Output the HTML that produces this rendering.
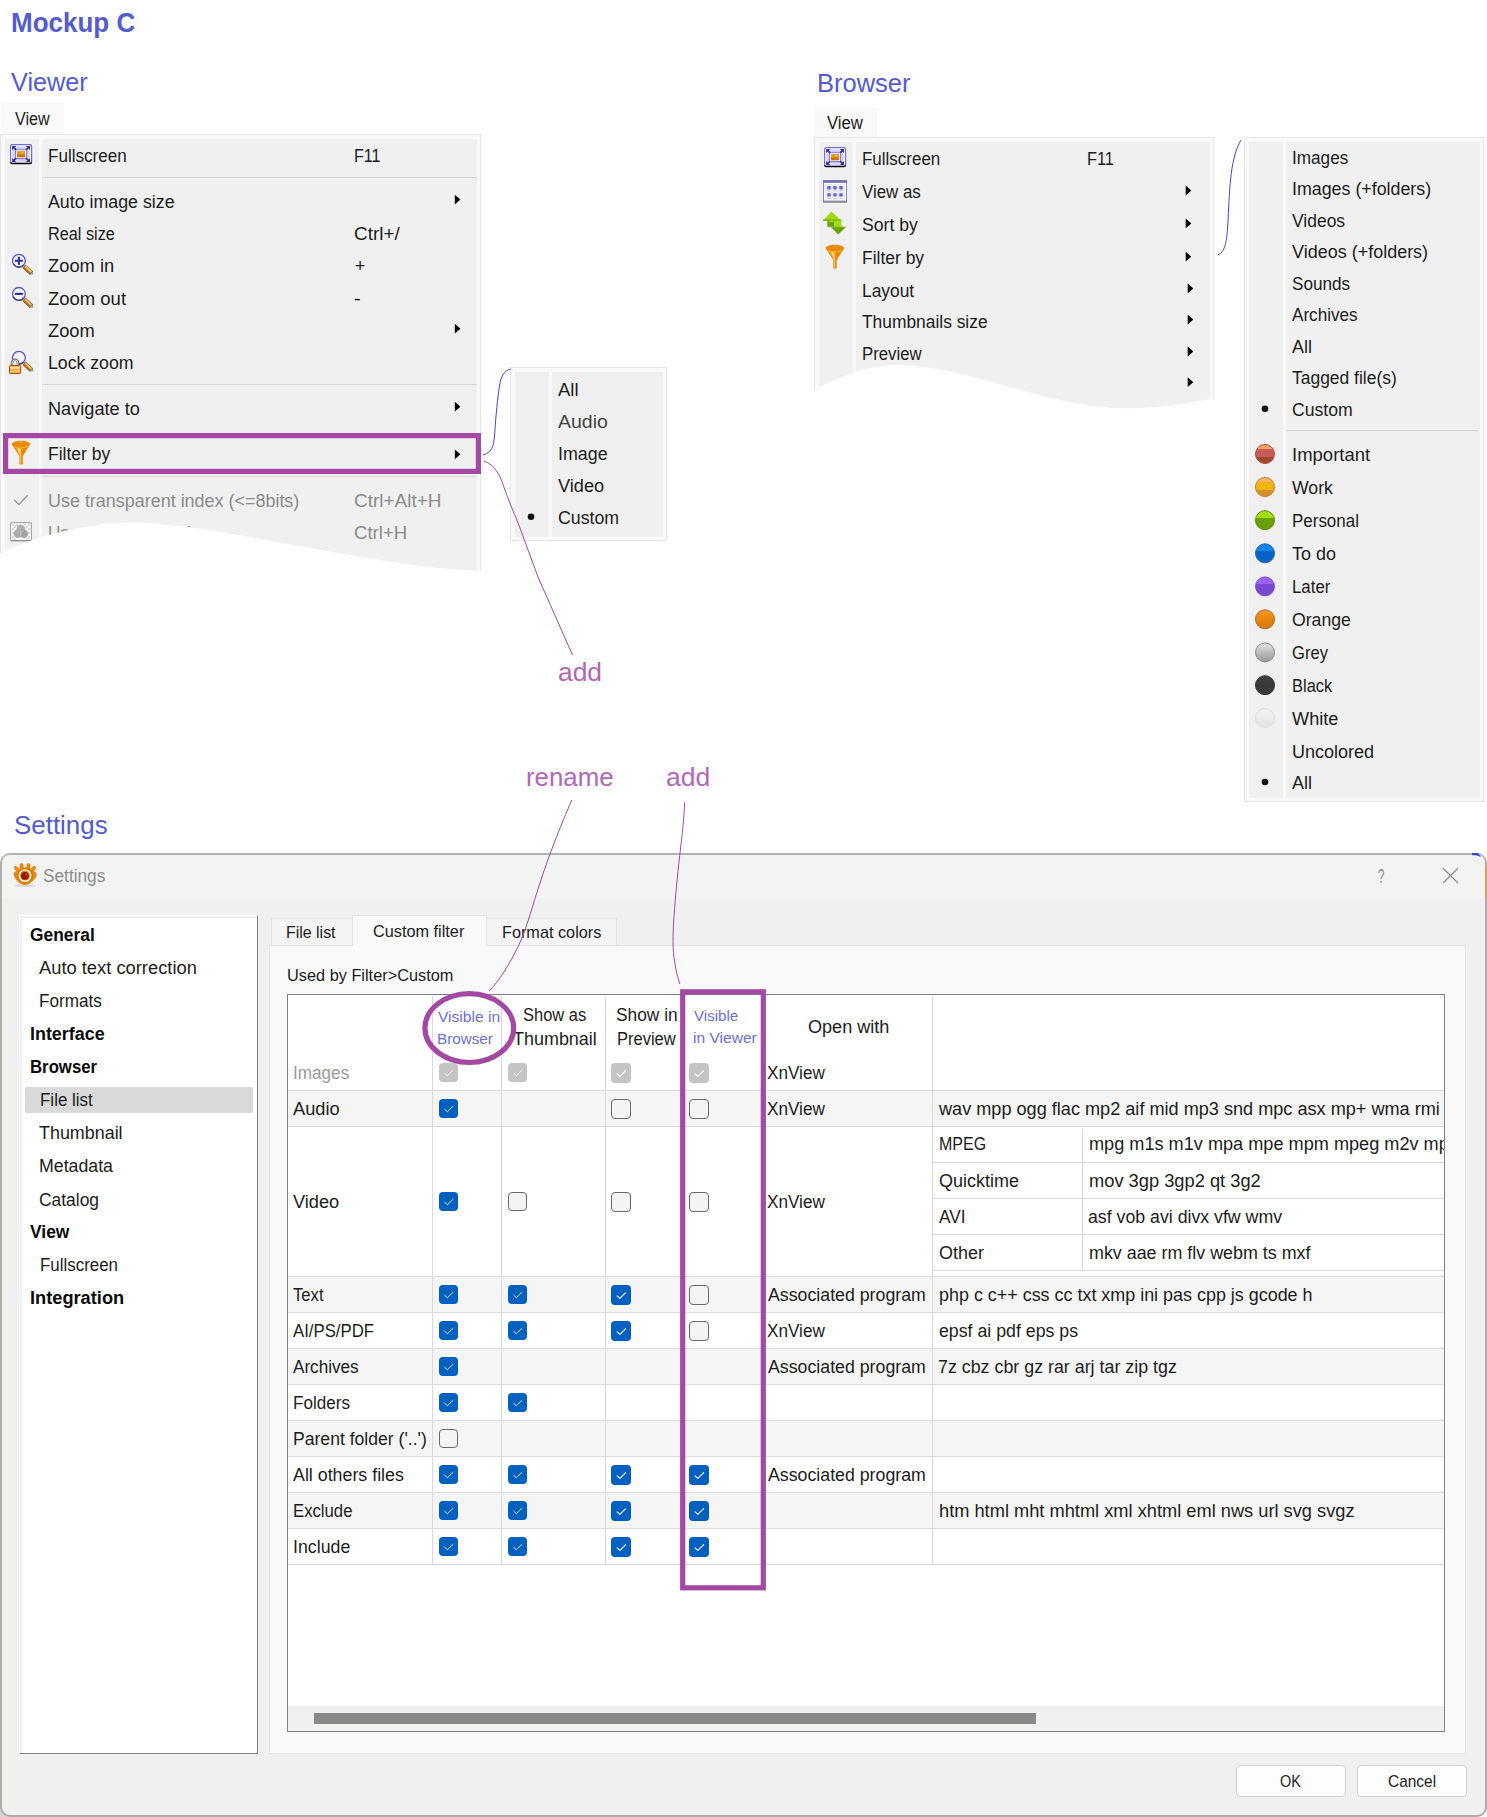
<!DOCTYPE html>
<html lang="en"><head><meta charset="utf-8"><title>Mockup C</title>
<style>
html,body{margin:0;padding:0;background:#fff}
body{width:1487px;height:1817px;position:relative;overflow:hidden;font-family:"Liberation Sans",sans-serif}
.a{position:absolute;box-sizing:border-box}
.t{position:absolute;white-space:nowrap;line-height:1;transform-origin:0 0;display:block}
svg{position:absolute;left:0;top:0;overflow:visible}
.cb{position:absolute;box-sizing:border-box;border-radius:4px}
.cb.on{background:#0060c0}
.cb.dis{background:#c4c4c4}
.cb.off{background:#f4f4f4;border:1px solid #6a6a6a}
</style></head><body>

<span class="t" style="left:10.96px;top:10.15px;font-size:27px;color:#535bce;transform:scaleX(0.9624);font-weight:bold;">Mockup C</span>
<span class="t" style="left:11.09px;top:69.15px;font-size:26.5px;color:#535bce;transform:scaleX(0.9529);">Viewer</span>
<span class="t" style="left:817.31px;top:70.15px;font-size:26.5px;color:#535bce;transform:scaleX(0.9622);">Browser</span>
<span class="t" style="left:13.72px;top:813.15px;font-size:25.5px;color:#535bce;transform:scaleX(1.0160);">Settings</span>
<div class="a" style="left:1px;top:103px;width:63px;height:31px;background:#f9f9f9;"></div>
<span class="t" style="left:14.73px;top:111.15px;font-size:17.5px;color:#1c1c1c;transform:scaleX(0.9207);">View</span>
<div class="a" style="left:0px;top:134px;width:481px;height:466px;background:#f9f9f9;border:1px solid #e5e5e5;"></div>
<div class="a" style="left:5px;top:139px;width:34px;height:457px;background:#f0f0f0;"></div>
<div class="a" style="left:42px;top:139px;width:435px;height:457px;background:#f0f0f0;"></div>
<div class="a" style="left:42px;top:177px;width:435px;height:1px;background:#d6d6d6;"></div>
<div class="a" style="left:42px;top:384px;width:435px;height:1px;background:#d6d6d6;"></div>
<div class="a" style="left:42px;top:475.5px;width:435px;height:1px;background:#d6d6d6;"></div>
<span class="t" style="left:48.20px;top:148.15px;font-size:17.5px;color:#1c1c1c;transform:scaleX(0.9763);">Fullscreen</span>
<span class="t" style="left:48.17px;top:194.15px;font-size:17.5px;color:#1c1c1c;transform:scaleX(1.0162);">Auto image size</span>
<span class="t" style="left:48.27px;top:226.15px;font-size:17.5px;color:#1c1c1c;transform:scaleX(0.9289);">Real size</span>
<span class="t" style="left:48.02px;top:258.15px;font-size:17.5px;color:#1c1c1c;transform:scaleX(1.0468);">Zoom in</span>
<span class="t" style="left:48.01px;top:291.15px;font-size:17.5px;color:#1c1c1c;transform:scaleX(1.0555);">Zoom out</span>
<span class="t" style="left:48.02px;top:323.15px;font-size:17.5px;color:#1c1c1c;transform:scaleX(1.0459);">Zoom</span>
<span class="t" style="left:48.15px;top:355.15px;font-size:17.5px;color:#1c1c1c;transform:scaleX(1.0094);">Lock zoom</span>
<span class="t" style="left:48.11px;top:401.15px;font-size:17.5px;color:#1c1c1c;transform:scaleX(1.0376);">Navigate to</span>
<span class="t" style="left:48.16px;top:446.15px;font-size:17.5px;color:#1c1c1c;transform:scaleX(1.0006);">Filter by</span>
<span class="t" style="left:48.22px;top:493.15px;font-size:17.5px;color:#8b8b8b;transform:scaleX(1.0252);">Use transparent index (&lt;=8bits)</span>
<span class="t" style="left:48.27px;top:525.15px;font-size:17.5px;color:#8b8b8b;transform:scaleX(0.9849);">Use alpha channel</span>
<span class="t" style="left:354.38px;top:148.15px;font-size:17.5px;color:#1c1c1c;transform:scaleX(0.9185);">F11</span>
<span class="t" style="left:354.04px;top:226.15px;font-size:17.5px;color:#1c1c1c;transform:scaleX(1.0795);">Ctrl+/</span>
<span class="t" style="left:354.55px;top:258.15px;font-size:17.5px;color:#1c1c1c;transform:scaleX(0.9997);">+</span>
<span class="t" style="left:353.91px;top:291.15px;font-size:17.5px;color:#1c1c1c;transform:scaleX(1.1469);">-</span>
<span class="t" style="left:354.04px;top:493.15px;font-size:17.5px;color:#8b8b8b;transform:scaleX(1.0842);">Ctrl+Alt+H</span>
<span class="t" style="left:354.06px;top:525.15px;font-size:17.5px;color:#8b8b8b;transform:scaleX(1.0616);">Ctrl+H</span>
<div class="a" style="left:510px;top:367px;width:157px;height:174px;background:#f9f9f9;border:1px solid #e5e5e5;"></div>
<div class="a" style="left:515px;top:372px;width:34px;height:165px;background:#f0f0f0;"></div>
<div class="a" style="left:552px;top:372px;width:111px;height:165px;background:#f0f0f0;"></div>
<span class="t" style="left:557.96px;top:382.15px;font-size:17.5px;color:#1c1c1c;transform:scaleX(1.0579);">All</span>
<span class="t" style="left:557.96px;top:414.15px;font-size:17.5px;color:#444;transform:scaleX(1.1139);">Audio</span>
<span class="t" style="left:557.75px;top:446.15px;font-size:17.5px;color:#1c1c1c;transform:scaleX(1.0206);">Image</span>
<span class="t" style="left:557.92px;top:478.15px;font-size:17.5px;color:#1c1c1c;transform:scaleX(1.0383);">Video</span>
<span class="t" style="left:557.80px;top:510.15px;font-size:17.5px;color:#1c1c1c;transform:scaleX(1.0129);">Custom</span>
<div class="a" style="left:814px;top:107.5px;width:63px;height:29.5px;background:#f9f9f9;"></div>
<span class="t" style="left:827.43px;top:115.15px;font-size:17.5px;color:#1c1c1c;transform:scaleX(0.9553);">View</span>
<div class="a" style="left:814px;top:137px;width:400px;height:303px;background:#f9f9f9;border:1px solid #e5e5e5;"></div>
<div class="a" style="left:819px;top:142px;width:34px;height:294px;background:#f0f0f0;"></div>
<div class="a" style="left:856px;top:142px;width:354px;height:294px;background:#f0f0f0;"></div>
<span class="t" style="left:862.41px;top:151.15px;font-size:17.5px;color:#1c1c1c;transform:scaleX(0.9699);">Fullscreen</span>
<span class="t" style="left:862.33px;top:184.15px;font-size:17.5px;color:#1c1c1c;transform:scaleX(0.9627);">View as</span>
<span class="t" style="left:862.20px;top:217.15px;font-size:17.5px;color:#1c1c1c;transform:scaleX(1.0071);">Sort by</span>
<span class="t" style="left:862.37px;top:250.15px;font-size:17.5px;color:#1c1c1c;transform:scaleX(0.9973);">Filter by</span>
<span class="t" style="left:862.38px;top:283.15px;font-size:17.5px;color:#1c1c1c;transform:scaleX(0.9926);">Layout</span>
<span class="t" style="left:862.21px;top:314.15px;font-size:17.5px;color:#1c1c1c;transform:scaleX(0.9931);">Thumbnails size</span>
<span class="t" style="left:862.42px;top:346.15px;font-size:17.5px;color:#1c1c1c;transform:scaleX(0.9581);">Preview</span>
<span class="t" style="left:1087.26px;top:151.15px;font-size:17.5px;color:#1c1c1c;transform:scaleX(0.9335);">F11</span>
<div class="a" style="left:1244px;top:136.5px;width:240px;height:665.0px;background:#f9f9f9;border:1px solid #e5e5e5;"></div>
<div class="a" style="left:1249px;top:141.5px;width:34px;height:656.0px;background:#f0f0f0;"></div>
<div class="a" style="left:1286px;top:141.5px;width:194px;height:656.0px;background:#f0f0f0;"></div>
<div class="a" style="left:1286px;top:429.5px;width:192px;height:1px;background:#d6d6d6;"></div>
<span class="t" style="left:1292.02px;top:150.15px;font-size:17.5px;color:#1c1c1c;transform:scaleX(0.9811);">Images</span>
<span class="t" style="left:1291.96px;top:181.15px;font-size:17.5px;color:#1c1c1c;transform:scaleX(1.0183);">Images (+folders)</span>
<span class="t" style="left:1292.12px;top:213.15px;font-size:17.5px;color:#1c1c1c;transform:scaleX(0.9984);">Videos</span>
<span class="t" style="left:1292.12px;top:244.15px;font-size:17.5px;color:#1c1c1c;transform:scaleX(1.0275);">Videos (+folders)</span>
<span class="t" style="left:1292.02px;top:276.15px;font-size:17.5px;color:#1c1c1c;transform:scaleX(0.9806);">Sounds</span>
<span class="t" style="left:1292.17px;top:307.15px;font-size:17.5px;color:#1c1c1c;transform:scaleX(0.9784);">Archives</span>
<span class="t" style="left:1292.16px;top:339.15px;font-size:17.5px;color:#1c1c1c;transform:scaleX(1.0250);">All</span>
<span class="t" style="left:1292.01px;top:370.15px;font-size:17.5px;color:#1c1c1c;transform:scaleX(0.9974);">Tagged file(s)</span>
<span class="t" style="left:1292.00px;top:402.15px;font-size:17.5px;color:#1c1c1c;transform:scaleX(1.0077);">Custom</span>
<span class="t" style="left:1291.89px;top:447.15px;font-size:17.5px;color:#1c1c1c;transform:scaleX(1.0571);">Important</span>
<span class="t" style="left:1292.12px;top:480.15px;font-size:17.5px;color:#1c1c1c;transform:scaleX(1.0084);">Work</span>
<span class="t" style="left:1292.21px;top:513.15px;font-size:17.5px;color:#1c1c1c;transform:scaleX(0.9690);">Personal</span>
<span class="t" style="left:1292.00px;top:546.15px;font-size:17.5px;color:#1c1c1c;transform:scaleX(1.0268);">To do</span>
<span class="t" style="left:1292.22px;top:579.15px;font-size:17.5px;color:#1c1c1c;transform:scaleX(0.9617);">Later</span>
<span class="t" style="left:1292.06px;top:612.15px;font-size:17.5px;color:#1c1c1c;transform:scaleX(1.0077);">Orange</span>
<span class="t" style="left:1292.07px;top:645.15px;font-size:17.5px;color:#1c1c1c;transform:scaleX(0.9484);">Grey</span>
<span class="t" style="left:1292.25px;top:678.15px;font-size:17.5px;color:#1c1c1c;transform:scaleX(0.9400);">Black</span>
<span class="t" style="left:1292.12px;top:711.15px;font-size:17.5px;color:#1c1c1c;transform:scaleX(1.0370);">White</span>
<span class="t" style="left:1292.21px;top:744.15px;font-size:17.5px;color:#1c1c1c;transform:scaleX(1.0286);">Uncolored</span>
<span class="t" style="left:1292.16px;top:775.15px;font-size:17.5px;color:#1c1c1c;transform:scaleX(1.0250);">All</span>
<div class="a" style="left:0px;top:1805px;width:12px;height:12px;background:#d6d6d6;"></div>
<div class="a" style="left:0;top:853px;width:1487px;height:964px;background:#f0f0f0;border:2px solid #adada9;border-top-color:#b2b2b2;border-radius:10px;overflow:hidden"><div class="a" style="left:0;top:0;width:1487px;height:43px;background:#f2f4f3"></div></div>
<div class="a" style="left:1485px;top:865px;width:2px;height:34px;background:#c9a468;"></div>
<span class="t" style="left:43.02px;top:868.15px;font-size:17.5px;color:#8c8c8c;transform:scaleX(0.9854);">Settings</span>
<span class="t" style="left:1377.64px;top:865.15px;font-size:21px;color:#8c8c8c;transform:scaleX(0.5379);">?</span>
<div class="a" style="left:19px;top:915px;width:239px;height:839px;background:#f0f0f0;border-left:1px solid #fff;border-top:1px solid #fff;border-right:1px solid #7d8089;border-bottom:1px solid #7d8089;"></div>
<div class="a" style="left:22px;top:918px;width:235px;height:835px;background:#fff;"></div>
<div class="a" style="left:25px;top:1086.5px;width:228px;height:26px;background:#d9d9d9;border-radius:2px;"></div>
<span class="t" style="left:29.69px;top:927.15px;font-size:17.5px;color:#0a0a0a;transform:scaleX(0.9934);font-weight:bold;">General</span>
<span class="t" style="left:39.46px;top:960.15px;font-size:17.5px;color:#1c1c1c;transform:scaleX(1.0468);">Auto text correction</span>
<span class="t" style="left:39.49px;top:993.15px;font-size:17.5px;color:#1c1c1c;transform:scaleX(0.9790);">Formats</span>
<span class="t" style="left:29.90px;top:1026.15px;font-size:17.5px;color:#0a0a0a;transform:scaleX(1.0228);font-weight:bold;">Interface</span>
<span class="t" style="left:29.98px;top:1059.15px;font-size:17.5px;color:#0a0a0a;transform:scaleX(0.9579);font-weight:bold;">Browser</span>
<span class="t" style="left:39.51px;top:1092.15px;font-size:17.5px;color:#1c1c1c;transform:scaleX(0.9700);">File list</span>
<span class="t" style="left:39.30px;top:1125.15px;font-size:17.5px;color:#1c1c1c;transform:scaleX(1.0232);">Thumbnail</span>
<span class="t" style="left:39.44px;top:1158.15px;font-size:17.5px;color:#1c1c1c;transform:scaleX(1.0136);">Metadata</span>
<span class="t" style="left:39.32px;top:1192.15px;font-size:17.5px;color:#1c1c1c;transform:scaleX(0.9948);">Catalog</span>
<span class="t" style="left:29.58px;top:1224.15px;font-size:17.5px;color:#0a0a0a;transform:scaleX(0.9955);font-weight:bold;">View</span>
<span class="t" style="left:39.51px;top:1257.15px;font-size:17.5px;color:#1c1c1c;transform:scaleX(0.9661);">Fullscreen</span>
<span class="t" style="left:29.88px;top:1290.15px;font-size:17.5px;color:#0a0a0a;transform:scaleX(1.0413);font-weight:bold;">Integration</span>
<div class="a" style="left:271px;top:918px;width:82px;height:28px;background:#f3f4f3;border:1px solid #e4e4e4;"></div>
<div class="a" style="left:486px;top:918px;width:131px;height:28px;background:#f3f4f3;border:1px solid #e4e4e4;"></div>
<div class="a" style="left:268.5px;top:945px;width:1197.5px;height:808.5px;background:#f9f9f9;border:1px solid #e4e4e4;"></div>
<div class="a" style="left:352px;top:915px;width:134.5px;height:31px;background:#f9f9f9;border:1px solid #e4e4e4;border-bottom:none;"></div>
<span class="t" style="left:286.29px;top:924.15px;font-size:17px;color:#1c1c1c;transform:scaleX(0.9363);">File list</span>
<span class="t" style="left:373.17px;top:923.15px;font-size:17px;color:#1c1c1c;transform:scaleX(0.9569);">Custom filter</span>
<span class="t" style="left:502.27px;top:924.15px;font-size:17px;color:#1c1c1c;transform:scaleX(0.9558);">Format colors</span>
<span class="t" style="left:287.34px;top:967.15px;font-size:17px;color:#1c1c1c;transform:scaleX(0.9600);">Used by Filter&gt;Custom</span>
<div class="a" style="left:287px;top:994px;width:1158px;height:738px;background:#fff;border:1px solid #7d8089;"></div>
<div class="a" style="left:288px;top:1090px;width:1155.5px;height:36px;background:#f5f5f5;"></div>
<div class="a" style="left:288px;top:1276.5px;width:1155.5px;height:36.0px;background:#f5f5f5;"></div>
<div class="a" style="left:288px;top:1348.5px;width:1155.5px;height:36.0px;background:#f5f5f5;"></div>
<div class="a" style="left:288px;top:1420.5px;width:1155.5px;height:36.0px;background:#f5f5f5;"></div>
<div class="a" style="left:288px;top:1492.5px;width:1155.5px;height:36.0px;background:#f5f5f5;"></div>
<div class="a" style="left:288px;top:1089.5px;width:1155.5px;height:1px;background:#d9d9d9;"></div>
<div class="a" style="left:288px;top:1125.5px;width:1155.5px;height:1px;background:#d9d9d9;"></div>
<div class="a" style="left:288px;top:1276.0px;width:1155.5px;height:1px;background:#d9d9d9;"></div>
<div class="a" style="left:288px;top:1312.0px;width:1155.5px;height:1px;background:#d9d9d9;"></div>
<div class="a" style="left:288px;top:1348.0px;width:1155.5px;height:1px;background:#d9d9d9;"></div>
<div class="a" style="left:288px;top:1384.0px;width:1155.5px;height:1px;background:#d9d9d9;"></div>
<div class="a" style="left:288px;top:1420.0px;width:1155.5px;height:1px;background:#d9d9d9;"></div>
<div class="a" style="left:288px;top:1456.0px;width:1155.5px;height:1px;background:#d9d9d9;"></div>
<div class="a" style="left:288px;top:1492.0px;width:1155.5px;height:1px;background:#d9d9d9;"></div>
<div class="a" style="left:288px;top:1528.0px;width:1155.5px;height:1px;background:#d9d9d9;"></div>
<div class="a" style="left:288px;top:1564.0px;width:1155.5px;height:1px;background:#d9d9d9;"></div>
<div class="a" style="left:432.0px;top:996px;width:1px;height:568.5px;background:#d9d9d9;"></div>
<div class="a" style="left:501.0px;top:996px;width:1px;height:568.5px;background:#d9d9d9;"></div>
<div class="a" style="left:605.0px;top:996px;width:1px;height:568.5px;background:#d9d9d9;"></div>
<div class="a" style="left:932.0px;top:996px;width:1px;height:568.5px;background:#d9d9d9;"></div>
<div class="a" style="left:933px;top:1161.5px;width:510.5px;height:1px;background:#d9d9d9;"></div>
<div class="a" style="left:933px;top:1197.8px;width:510.5px;height:1px;background:#d9d9d9;"></div>
<div class="a" style="left:933px;top:1233.8px;width:510.5px;height:1px;background:#d9d9d9;"></div>
<div class="a" style="left:933px;top:1269.7px;width:510.5px;height:1px;background:#d9d9d9;"></div>
<div class="a" style="left:1082.2px;top:1129px;width:1px;height:141px;background:#d9d9d9;"></div>
<div class="a" style="left:288px;top:1706px;width:1156px;height:24.5px;background:#f0f0f0;"></div>
<div class="a" style="left:314px;top:1713px;width:722px;height:11px;background:#898987;"></div>
<span class="t" style="left:438.33px;top:1009.15px;font-size:15px;color:#6a70d6;transform:scaleX(1.0389);">Visible in</span>
<span class="t" style="left:437.15px;top:1031.15px;font-size:15px;color:#6a70d6;transform:scaleX(1.0162);">Browser</span>
<span class="t" style="left:523.25px;top:1007.15px;font-size:17.5px;color:#1c1c1c;transform:scaleX(0.9407);">Show as</span>
<span class="t" style="left:512.70px;top:1031.15px;font-size:17.5px;color:#1c1c1c;transform:scaleX(1.0257);">Thumbnail</span>
<span class="t" style="left:615.51px;top:1007.15px;font-size:17.5px;color:#1c1c1c;transform:scaleX(0.9896);">Show in</span>
<span class="t" style="left:616.65px;top:1031.15px;font-size:17.5px;color:#1c1c1c;transform:scaleX(0.9433);">Preview</span>
<span class="t" style="left:693.53px;top:1008.15px;font-size:15px;color:#6a70d6;transform:scaleX(1.0073);">Visible</span>
<span class="t" style="left:692.56px;top:1030.15px;font-size:15px;color:#6a70d6;transform:scaleX(1.0388);">in Viewer</span>
<span class="t" style="left:808.14px;top:1019.15px;font-size:17.5px;color:#1c1c1c;transform:scaleX(1.0322);">Open with</span>
<span class="t" style="left:293.02px;top:1065.15px;font-size:17.5px;color:#9a9a9a;transform:scaleX(0.9793);">Images</span>
<span class="t" style="left:293.16px;top:1101.15px;font-size:17.5px;color:#1c1c1c;transform:scaleX(1.0434);">Audio</span>
<span class="t" style="left:293.12px;top:1194.15px;font-size:17.5px;color:#1c1c1c;transform:scaleX(1.0406);">Video</span>
<span class="t" style="left:293.03px;top:1287.15px;font-size:17.5px;color:#1c1c1c;transform:scaleX(0.9502);">Text</span>
<span class="t" style="left:293.17px;top:1323.15px;font-size:17.5px;color:#1c1c1c;transform:scaleX(0.9575);">AI/PS/PDF</span>
<span class="t" style="left:293.17px;top:1359.15px;font-size:17.5px;color:#1c1c1c;transform:scaleX(0.9784);">Archives</span>
<span class="t" style="left:293.20px;top:1395.15px;font-size:17.5px;color:#1c1c1c;transform:scaleX(0.9754);">Folders</span>
<span class="t" style="left:293.16px;top:1431.15px;font-size:17.5px;color:#1c1c1c;transform:scaleX(1.0046);">Parent folder (&#x27;..&#x27;)</span>
<span class="t" style="left:293.17px;top:1467.15px;font-size:17.5px;color:#1c1c1c;transform:scaleX(1.0179);">All others files</span>
<span class="t" style="left:293.23px;top:1503.15px;font-size:17.5px;color:#1c1c1c;transform:scaleX(0.9543);">Exclude</span>
<span class="t" style="left:292.96px;top:1539.15px;font-size:17.5px;color:#1c1c1c;transform:scaleX(1.0160);">Include</span>
<span class="t" style="left:767.31px;top:1065.15px;font-size:17.5px;color:#1c1c1c;transform:scaleX(0.9801);">XnView</span>
<span class="t" style="left:767.31px;top:1101.15px;font-size:17.5px;color:#1c1c1c;transform:scaleX(0.9801);">XnView</span>
<span class="t" style="left:938.73px;top:1101.15px;font-size:17.5px;color:#1c1c1c;transform:scaleX(1.0352);">wav mpp ogg flac mp2 aif mid mp3 snd mpc asx mp+ wma rmi</span>
<span class="t" style="left:767.31px;top:1194.15px;font-size:17.5px;color:#1c1c1c;transform:scaleX(0.9801);">XnView</span>
<span class="t" style="left:767.67px;top:1287.15px;font-size:17.5px;color:#1c1c1c;transform:scaleX(1.0140);">Associated program</span>
<span class="t" style="left:938.74px;top:1287.15px;font-size:17.5px;color:#1c1c1c;transform:scaleX(1.0240);">php c c++ css cc txt xmp ini pas cpp js gcode h</span>
<span class="t" style="left:767.31px;top:1323.15px;font-size:17.5px;color:#1c1c1c;transform:scaleX(0.9801);">XnView</span>
<span class="t" style="left:938.55px;top:1323.15px;font-size:17.5px;color:#1c1c1c;transform:scaleX(1.0140);">epsf ai pdf eps ps</span>
<span class="t" style="left:767.67px;top:1359.15px;font-size:17.5px;color:#1c1c1c;transform:scaleX(1.0140);">Associated program</span>
<span class="t" style="left:938.49px;top:1359.15px;font-size:17.5px;color:#1c1c1c;transform:scaleX(1.0189);">7z cbz cbr gz rar arj tar zip tgz</span>
<span class="t" style="left:767.67px;top:1467.15px;font-size:17.5px;color:#1c1c1c;transform:scaleX(1.0140);">Associated program</span>
<span class="t" style="left:938.64px;top:1503.15px;font-size:17.5px;color:#1c1c1c;transform:scaleX(1.0424);">htm html mht mhtml xml xhtml eml nws url svg svgz</span>
<span class="t" style="left:938.79px;top:1136.15px;font-size:17.5px;color:#1c1c1c;transform:scaleX(0.9141);">MPEG</span>
<span class="t" style="left:938.55px;top:1173.15px;font-size:17.5px;color:#1c1c1c;transform:scaleX(1.0277);">Quicktime</span>
<span class="t" style="left:938.67px;top:1209.15px;font-size:17.5px;color:#1c1c1c;transform:scaleX(0.9858);">AVI</span>
<span class="t" style="left:938.55px;top:1245.15px;font-size:17.5px;color:#1c1c1c;transform:scaleX(1.0247);">Other</span>
<div class="a" style="left:1083px;top:1128px;width:360.5px;height:36px;overflow:hidden">
<span class="t" style="left:5.60px;top:8.15px;font-size:17.5px;color:#1c1c1c;transform:scaleX(1.0363);">mpg m1s m1v mpa mpe mpm mpeg m2v mpv</span>
</div>
<span class="t" style="left:1088.59px;top:1173.15px;font-size:17.5px;color:#1c1c1c;transform:scaleX(1.0444);">mov 3gp 3gp2 qt 3g2</span>
<span class="t" style="left:1088.45px;top:1209.15px;font-size:17.5px;color:#1c1c1c;transform:scaleX(1.0127);">asf vob avi divx vfw wmv</span>
<span class="t" style="left:1088.61px;top:1245.15px;font-size:17.5px;color:#1c1c1c;transform:scaleX(1.0213);">mkv aae rm flv webm ts mxf</span>
<div class="cb dis" style="left:439px;top:1063.0px;width:19px;height:19px"><svg width="19" height="19" viewBox="0 0 19 19"><path d="M5.8 10.3 L8.4 12.7 L13.9 7.3" fill="none" stroke="#fff" stroke-width="0.85" stroke-linecap="round" stroke-linejoin="round"/></svg></div>
<div class="cb dis" style="left:508px;top:1063.0px;width:19px;height:19px"><svg width="19" height="19" viewBox="0 0 19 19"><path d="M5.8 10.3 L8.4 12.7 L13.9 7.3" fill="none" stroke="#fff" stroke-width="0.85" stroke-linecap="round" stroke-linejoin="round"/></svg></div>
<div class="cb dis" style="left:611px;top:1063.0px;width:20px;height:20px"><svg width="20" height="20" viewBox="0 0 19 19"><path d="M5.8 10.3 L8.4 12.7 L13.9 7.3" fill="none" stroke="#fff" stroke-width="1.05" stroke-linecap="round" stroke-linejoin="round"/></svg></div>
<div class="cb dis" style="left:689px;top:1063.0px;width:20px;height:20px"><svg width="20" height="20" viewBox="0 0 19 19"><path d="M5.8 10.3 L8.4 12.7 L13.9 7.3" fill="none" stroke="#fff" stroke-width="1.05" stroke-linecap="round" stroke-linejoin="round"/></svg></div>
<div class="cb on" style="left:439px;top:1099.0px;width:19px;height:19px"><svg width="19" height="19" viewBox="0 0 19 19"><path d="M5.8 10.3 L8.4 12.7 L13.9 7.3" fill="none" stroke="#fff" stroke-width="0.85" stroke-linecap="round" stroke-linejoin="round"/></svg></div>
<div class="cb off" style="left:611px;top:1099.0px;width:20px;height:20px"></div>
<div class="cb off" style="left:689px;top:1099.0px;width:20px;height:20px"></div>
<div class="cb on" style="left:439px;top:1192.0px;width:19px;height:19px"><svg width="19" height="19" viewBox="0 0 19 19"><path d="M5.8 10.3 L8.4 12.7 L13.9 7.3" fill="none" stroke="#fff" stroke-width="0.85" stroke-linecap="round" stroke-linejoin="round"/></svg></div>
<div class="cb off" style="left:508px;top:1192.0px;width:19px;height:19px"></div>
<div class="cb off" style="left:611px;top:1192.0px;width:20px;height:20px"></div>
<div class="cb off" style="left:689px;top:1192.0px;width:20px;height:20px"></div>
<div class="cb on" style="left:439px;top:1285.0px;width:19px;height:19px"><svg width="19" height="19" viewBox="0 0 19 19"><path d="M5.8 10.3 L8.4 12.7 L13.9 7.3" fill="none" stroke="#fff" stroke-width="0.85" stroke-linecap="round" stroke-linejoin="round"/></svg></div>
<div class="cb on" style="left:508px;top:1285.0px;width:19px;height:19px"><svg width="19" height="19" viewBox="0 0 19 19"><path d="M5.8 10.3 L8.4 12.7 L13.9 7.3" fill="none" stroke="#fff" stroke-width="0.85" stroke-linecap="round" stroke-linejoin="round"/></svg></div>
<div class="cb on" style="left:611px;top:1285.0px;width:20px;height:20px"><svg width="20" height="20" viewBox="0 0 19 19"><path d="M5.8 10.3 L8.4 12.7 L13.9 7.3" fill="none" stroke="#fff" stroke-width="1.05" stroke-linecap="round" stroke-linejoin="round"/></svg></div>
<div class="cb off" style="left:689px;top:1285.0px;width:20px;height:20px"></div>
<div class="cb on" style="left:439px;top:1321.0px;width:19px;height:19px"><svg width="19" height="19" viewBox="0 0 19 19"><path d="M5.8 10.3 L8.4 12.7 L13.9 7.3" fill="none" stroke="#fff" stroke-width="0.85" stroke-linecap="round" stroke-linejoin="round"/></svg></div>
<div class="cb on" style="left:508px;top:1321.0px;width:19px;height:19px"><svg width="19" height="19" viewBox="0 0 19 19"><path d="M5.8 10.3 L8.4 12.7 L13.9 7.3" fill="none" stroke="#fff" stroke-width="0.85" stroke-linecap="round" stroke-linejoin="round"/></svg></div>
<div class="cb on" style="left:611px;top:1321.0px;width:20px;height:20px"><svg width="20" height="20" viewBox="0 0 19 19"><path d="M5.8 10.3 L8.4 12.7 L13.9 7.3" fill="none" stroke="#fff" stroke-width="1.05" stroke-linecap="round" stroke-linejoin="round"/></svg></div>
<div class="cb off" style="left:689px;top:1321.0px;width:20px;height:20px"></div>
<div class="cb on" style="left:439px;top:1357.0px;width:19px;height:19px"><svg width="19" height="19" viewBox="0 0 19 19"><path d="M5.8 10.3 L8.4 12.7 L13.9 7.3" fill="none" stroke="#fff" stroke-width="0.85" stroke-linecap="round" stroke-linejoin="round"/></svg></div>
<div class="cb on" style="left:439px;top:1393.0px;width:19px;height:19px"><svg width="19" height="19" viewBox="0 0 19 19"><path d="M5.8 10.3 L8.4 12.7 L13.9 7.3" fill="none" stroke="#fff" stroke-width="0.85" stroke-linecap="round" stroke-linejoin="round"/></svg></div>
<div class="cb on" style="left:508px;top:1393.0px;width:19px;height:19px"><svg width="19" height="19" viewBox="0 0 19 19"><path d="M5.8 10.3 L8.4 12.7 L13.9 7.3" fill="none" stroke="#fff" stroke-width="0.85" stroke-linecap="round" stroke-linejoin="round"/></svg></div>
<div class="cb off" style="left:439px;top:1429.0px;width:19px;height:19px"></div>
<div class="cb on" style="left:439px;top:1465.0px;width:19px;height:19px"><svg width="19" height="19" viewBox="0 0 19 19"><path d="M5.8 10.3 L8.4 12.7 L13.9 7.3" fill="none" stroke="#fff" stroke-width="0.85" stroke-linecap="round" stroke-linejoin="round"/></svg></div>
<div class="cb on" style="left:508px;top:1465.0px;width:19px;height:19px"><svg width="19" height="19" viewBox="0 0 19 19"><path d="M5.8 10.3 L8.4 12.7 L13.9 7.3" fill="none" stroke="#fff" stroke-width="0.85" stroke-linecap="round" stroke-linejoin="round"/></svg></div>
<div class="cb on" style="left:611px;top:1465.0px;width:20px;height:20px"><svg width="20" height="20" viewBox="0 0 19 19"><path d="M5.8 10.3 L8.4 12.7 L13.9 7.3" fill="none" stroke="#fff" stroke-width="1.05" stroke-linecap="round" stroke-linejoin="round"/></svg></div>
<div class="cb on" style="left:689px;top:1465.0px;width:20px;height:20px"><svg width="20" height="20" viewBox="0 0 19 19"><path d="M5.8 10.3 L8.4 12.7 L13.9 7.3" fill="none" stroke="#fff" stroke-width="1.05" stroke-linecap="round" stroke-linejoin="round"/></svg></div>
<div class="cb on" style="left:439px;top:1501.0px;width:19px;height:19px"><svg width="19" height="19" viewBox="0 0 19 19"><path d="M5.8 10.3 L8.4 12.7 L13.9 7.3" fill="none" stroke="#fff" stroke-width="0.85" stroke-linecap="round" stroke-linejoin="round"/></svg></div>
<div class="cb on" style="left:508px;top:1501.0px;width:19px;height:19px"><svg width="19" height="19" viewBox="0 0 19 19"><path d="M5.8 10.3 L8.4 12.7 L13.9 7.3" fill="none" stroke="#fff" stroke-width="0.85" stroke-linecap="round" stroke-linejoin="round"/></svg></div>
<div class="cb on" style="left:611px;top:1501.0px;width:20px;height:20px"><svg width="20" height="20" viewBox="0 0 19 19"><path d="M5.8 10.3 L8.4 12.7 L13.9 7.3" fill="none" stroke="#fff" stroke-width="1.05" stroke-linecap="round" stroke-linejoin="round"/></svg></div>
<div class="cb on" style="left:689px;top:1501.0px;width:20px;height:20px"><svg width="20" height="20" viewBox="0 0 19 19"><path d="M5.8 10.3 L8.4 12.7 L13.9 7.3" fill="none" stroke="#fff" stroke-width="1.05" stroke-linecap="round" stroke-linejoin="round"/></svg></div>
<div class="cb on" style="left:439px;top:1537.0px;width:19px;height:19px"><svg width="19" height="19" viewBox="0 0 19 19"><path d="M5.8 10.3 L8.4 12.7 L13.9 7.3" fill="none" stroke="#fff" stroke-width="0.85" stroke-linecap="round" stroke-linejoin="round"/></svg></div>
<div class="cb on" style="left:508px;top:1537.0px;width:19px;height:19px"><svg width="19" height="19" viewBox="0 0 19 19"><path d="M5.8 10.3 L8.4 12.7 L13.9 7.3" fill="none" stroke="#fff" stroke-width="0.85" stroke-linecap="round" stroke-linejoin="round"/></svg></div>
<div class="cb on" style="left:611px;top:1537.0px;width:20px;height:20px"><svg width="20" height="20" viewBox="0 0 19 19"><path d="M5.8 10.3 L8.4 12.7 L13.9 7.3" fill="none" stroke="#fff" stroke-width="1.05" stroke-linecap="round" stroke-linejoin="round"/></svg></div>
<div class="cb on" style="left:689px;top:1537.0px;width:20px;height:20px"><svg width="20" height="20" viewBox="0 0 19 19"><path d="M5.8 10.3 L8.4 12.7 L13.9 7.3" fill="none" stroke="#fff" stroke-width="1.05" stroke-linecap="round" stroke-linejoin="round"/></svg></div>
<div class="a" style="left:1235.5px;top:1765px;width:110px;height:32px;background:#fdfdfd;border:1px solid #d2d2d2;border-radius:4px;"></div>
<div class="a" style="left:1357px;top:1765px;width:110px;height:32px;background:#fdfdfd;border:1px solid #d2d2d2;border-radius:4px;"></div>
<span class="t" style="left:1279.72px;top:1773.15px;font-size:17px;color:#1c1c1c;transform:scaleX(0.8487);">OK</span>
<span class="t" style="left:1388.11px;top:1773.15px;font-size:17px;color:#1c1c1c;transform:scaleX(0.9093);">Cancel</span>
<svg width="1487" height="1817" viewBox="0 0 1487 1817">

<g transform="translate(454.8 199.6)"><path d="M0 -4.9 L5.6 0 L0 4.9 Z" fill="#000"/></g>
<g transform="translate(454.8 328.7)"><path d="M0 -4.9 L5.6 0 L0 4.9 Z" fill="#000"/></g>
<g transform="translate(454.8 406.7)"><path d="M0 -4.9 L5.6 0 L0 4.9 Z" fill="#000"/></g>
<g transform="translate(454.8 454.3)"><path d="M0 -4.9 L5.6 0 L0 4.9 Z" fill="#000"/></g>
<g transform="translate(1185.7 190.5)"><path d="M0 -4.9 L5.6 0 L0 4.9 Z" fill="#000"/></g>
<g transform="translate(1185.7 223.4)"><path d="M0 -4.9 L5.6 0 L0 4.9 Z" fill="#000"/></g>
<g transform="translate(1185.7 256.7)"><path d="M0 -4.9 L5.6 0 L0 4.9 Z" fill="#000"/></g>
<g transform="translate(1187.7 288.4)"><path d="M0 -4.9 L5.6 0 L0 4.9 Z" fill="#000"/></g>
<g transform="translate(1187.7 319.6)"><path d="M0 -4.9 L5.6 0 L0 4.9 Z" fill="#000"/></g>
<g transform="translate(1187.7 351.5)"><path d="M0 -4.9 L5.6 0 L0 4.9 Z" fill="#000"/></g>
<g transform="translate(1187.7 382.2)"><path d="M0 -4.9 L5.6 0 L0 4.9 Z" fill="#000"/></g>
<circle cx="531" cy="516.7" r="3.3" fill="#111"/>
<circle cx="1265" cy="408.8" r="3.3" fill="#111"/>
<circle cx="1265" cy="782" r="3.3" fill="#111"/>
<g transform="translate(10 144)">
 <rect x=".6" y=".6" width="21" height="18.8" rx="1.6" fill="#fff" stroke="#6f6fd8" stroke-width="1.2"/>
 <path d="M.8 18.2 Q.9 19.5 2.2 19.6 H20 Q21.3 19.5 21.4 18.2" fill="none" stroke="#0a0a0a" stroke-width="1.5"/>
 <rect x="6.4" y="2.5" width="9.4" height="2.6" fill="#cfcff4"/><rect x="6.4" y="15.1" width="9.4" height="2.5" fill="#cfcff4"/>
 <rect x="2.5" y="6.2" width="2.6" height="7.8" fill="#cfcff4"/><rect x="17.1" y="6.2" width="2.6" height="7.8" fill="#cfcff4"/>
 <rect x="5.6" y="5.7" width="11" height="8.9" fill="#fff" stroke="#7d7ddc" stroke-width="1.1"/>
 <rect x="7.1" y="7.1" width="8" height="6.1" fill="#e8970f"/><rect x="7.1" y="10.4" width="8" height="2.8" fill="#cf7208"/>
 <rect x="10.8" y="8.3" width="3" height="1.1" fill="#f3b95a"/>
 <g fill="#3a339c">
  <path d="M2.1 2.1h4.4l-4.4 4.1z"/><path d="M20.1 2.1h-4.4l4.4 4.1z"/><path d="M2.1 18h4.4l-4.4 -4.1z"/><path d="M20.1 18h-4.4l4.4 -4.1z"/>
 </g>
 <path d="M3.4 3.3L6 5.8 M18.8 3.3L16.2 5.8 M3.4 16.8L6 14.4 M18.8 16.8L16.2 14.4" stroke="#3a339c" stroke-width="1.9"/></g><g transform="translate(824 147)">
 <rect x=".6" y=".6" width="21" height="18.8" rx="1.6" fill="#fff" stroke="#6f6fd8" stroke-width="1.2"/>
 <path d="M.8 18.2 Q.9 19.5 2.2 19.6 H20 Q21.3 19.5 21.4 18.2" fill="none" stroke="#0a0a0a" stroke-width="1.5"/>
 <rect x="6.4" y="2.5" width="9.4" height="2.6" fill="#cfcff4"/><rect x="6.4" y="15.1" width="9.4" height="2.5" fill="#cfcff4"/>
 <rect x="2.5" y="6.2" width="2.6" height="7.8" fill="#cfcff4"/><rect x="17.1" y="6.2" width="2.6" height="7.8" fill="#cfcff4"/>
 <rect x="5.6" y="5.7" width="11" height="8.9" fill="#fff" stroke="#7d7ddc" stroke-width="1.1"/>
 <rect x="7.1" y="7.1" width="8" height="6.1" fill="#e8970f"/><rect x="7.1" y="10.4" width="8" height="2.8" fill="#cf7208"/>
 <rect x="10.8" y="8.3" width="3" height="1.1" fill="#f3b95a"/>
 <g fill="#3a339c">
  <path d="M2.1 2.1h4.4l-4.4 4.1z"/><path d="M20.1 2.1h-4.4l4.4 4.1z"/><path d="M2.1 18h4.4l-4.4 -4.1z"/><path d="M20.1 18h-4.4l4.4 -4.1z"/>
 </g>
 <path d="M3.4 3.3L6 5.8 M18.8 3.3L16.2 5.8 M3.4 16.8L6 14.4 M18.8 16.8L16.2 14.4" stroke="#3a339c" stroke-width="1.9"/></g>
<g transform="translate(18.9 260.8)"><g>
 <line x1="5.2" y1="5.6" x2="12.6" y2="12.4" stroke="#7a4a1c" stroke-width="4.6" stroke-linecap="butt"/>
 <line x1="5.2" y1="5.6" x2="12.2" y2="12.0" stroke="#e2821a" stroke-width="3.2"/>
 <line x1="5.2" y1="5.6" x2="12.2" y2="12.0" stroke="#a8500c" stroke-width="3.2" stroke-dasharray=".7 .9"/>
 <line x1="6.4" y1="5.6" x2="12.4" y2="11.1" stroke="#f6de86" stroke-width="1.5"/>
 <path d="M11.3 13.3 L13.6 10.9 L13.9 13.4 Z" fill="#c8c8c8" stroke="#666" stroke-width=".5"/>
 <circle cx="0" cy="0" r="6.4" fill="#f3f3fd" stroke="#5656c6" stroke-width="1.3"/>
 <path d="M-5.6 3 A6.4 6.4 0 0 0 4.5 4.6" fill="none" stroke="#3c3c7c" stroke-width="1.2"/></g><path d="M-4 0H4M0 -4V4" stroke="#2d2d9d" stroke-width="2.1"/></g>
<g transform="translate(18.9 293.9)"><g>
 <line x1="5.2" y1="5.6" x2="12.6" y2="12.4" stroke="#7a4a1c" stroke-width="4.6" stroke-linecap="butt"/>
 <line x1="5.2" y1="5.6" x2="12.2" y2="12.0" stroke="#e2821a" stroke-width="3.2"/>
 <line x1="5.2" y1="5.6" x2="12.2" y2="12.0" stroke="#a8500c" stroke-width="3.2" stroke-dasharray=".7 .9"/>
 <line x1="6.4" y1="5.6" x2="12.4" y2="11.1" stroke="#f6de86" stroke-width="1.5"/>
 <path d="M11.3 13.3 L13.6 10.9 L13.9 13.4 Z" fill="#c8c8c8" stroke="#666" stroke-width=".5"/>
 <circle cx="0" cy="0" r="6.4" fill="#f3f3fd" stroke="#5656c6" stroke-width="1.3"/>
 <path d="M-5.6 3 A6.4 6.4 0 0 0 4.5 4.6" fill="none" stroke="#3c3c7c" stroke-width="1.2"/></g><path d="M-4 0H4" stroke="#2d2d9d" stroke-width="2.1"/></g>
<g transform="translate(18.9 357.7)"><g>
 <line x1="5.2" y1="5.6" x2="12.6" y2="12.4" stroke="#7a4a1c" stroke-width="4.6" stroke-linecap="butt"/>
 <line x1="5.2" y1="5.6" x2="12.2" y2="12.0" stroke="#e2821a" stroke-width="3.2"/>
 <line x1="5.2" y1="5.6" x2="12.2" y2="12.0" stroke="#a8500c" stroke-width="3.2" stroke-dasharray=".7 .9"/>
 <line x1="6.4" y1="5.6" x2="12.4" y2="11.1" stroke="#f6de86" stroke-width="1.5"/>
 <path d="M11.3 13.3 L13.6 10.9 L13.9 13.4 Z" fill="#c8c8c8" stroke="#666" stroke-width=".5"/>
 <circle cx="0" cy="0" r="6.4" fill="#f3f3fd" stroke="#5656c6" stroke-width="1.3"/>
 <path d="M-5.6 3 A6.4 6.4 0 0 0 4.5 4.6" fill="none" stroke="#3c3c7c" stroke-width="1.2"/></g></g>
<g transform="translate(9 359.2)">
 <path d="M3 7 V3.6 A3 3 0 0 1 9 3.6 V7" fill="#f4f4f8" stroke="#6c6c6c" stroke-width="2.6"/>
 <path d="M3.2 7 V3.6 A2.8 2.8 0 0 1 8.8 3.6 V7" fill="none" stroke="#d9d9d9" stroke-width="1"/>
 <rect x=".5" y="6.2" width="11.2" height="8.2" rx="1" fill="#f3a43c" stroke="#9a4a14" stroke-width="1"/>
 <rect x="1.2" y="7.6" width="9.8" height="2" fill="#fde2a0"/><rect x="1.2" y="11.2" width="9.8" height="1.6" fill="#fbc66a"/>
</g>
<g transform="translate(11.8 440.8)">
 <path d="M0 3.6 C0 -1.2 18.4 -1.2 18.4 3.6 L11 15.2 L11 23.3 Q9.2 24.6 7.6 23.3 L7.6 15.2 Z" fill="#e9890b"/>
 <path d="M2 5.2 Q9.2 8 16.4 5.2 L15.4 6.8 Q9.2 9 3 6.8Z" fill="#f7b61c"/>
 <path d="M4.6 7.4 L9.4 7.8 L9.4 22.8 L8.2 22.8 L8 14.6 Z" fill="#f9c04a"/>
 <path d="M5.8 7.6 L7.6 7.8 L8.4 13 Z" fill="#fde3a8"/>
 <ellipse cx="9.2" cy="1.7" rx="1.3" ry=".5" fill="#f9c22b"/></g><g transform="translate(825.7 244.8)">
 <path d="M0 3.6 C0 -1.2 18.4 -1.2 18.4 3.6 L11 15.2 L11 23.3 Q9.2 24.6 7.6 23.3 L7.6 15.2 Z" fill="#e9890b"/>
 <path d="M2 5.2 Q9.2 8 16.4 5.2 L15.4 6.8 Q9.2 9 3 6.8Z" fill="#f7b61c"/>
 <path d="M4.6 7.4 L9.4 7.8 L9.4 22.8 L8.2 22.8 L8 14.6 Z" fill="#f9c04a"/>
 <path d="M5.8 7.6 L7.6 7.8 L8.4 13 Z" fill="#fde3a8"/>
 <ellipse cx="9.2" cy="1.7" rx="1.3" ry=".5" fill="#f9c22b"/></g>
<path d="M14.2 499.7 L18.9 504.6 L27.7 495.2" fill="none" stroke="#9a9a96" stroke-width="1.4"/>
<g transform="translate(10 522)">
 <rect x=".6" y=".6" width="20.8" height="18" rx="1.2" fill="#fff" stroke="#a9a9a9" stroke-width="1.2"/>
 <rect x="1" y="18" width="20" height="1.2" fill="#8a8a8a"/>
 <g fill="#d6d6d6"><rect x="2" y="2" width="2" height="2"/><rect x="6" y="2" width="2" height="2"/><rect x="14" y="2" width="2" height="2"/><rect x="18" y="2" width="2" height="2"/>
 <rect x="4" y="4" width="2" height="2"/><rect x="16" y="4" width="2" height="2"/><rect x="2" y="6" width="2" height="2"/><rect x="18" y="6" width="2" height="2"/>
 <rect x="2" y="10" width="2" height="2"/><rect x="18" y="10" width="2" height="2"/><rect x="2" y="14" width="2" height="2"/><rect x="18" y="14" width="2" height="2"/>
 <rect x="4" y="16" width="2" height="1.5"/><rect x="16" y="16" width="2" height="1.5"/></g>
 <circle cx="10.8" cy="6.6" r="4.2" fill="#b0b0ac"/><circle cx="8" cy="11.6" r="4.3" fill="#a9a9a9"/><circle cx="13.8" cy="11.6" r="4.3" fill="#a2a2a2"/>
 <path d="M7.6 8.3 L10.8 10.2 L14 8.3 L10.8 9.2Z" fill="#d6d6d6"/><rect x="10.1" y="10.2" width="1.4" height="4" fill="#c4c4c4"/>
</g>
<g transform="translate(823 180)">
 <rect x=".5" y=".5" width="23" height="20.3" fill="#ececec" stroke="#7676cc" stroke-width="1"/>
 <rect x="0" y="20.8" width="24" height="2" fill="#8e8e8e"/>
 <rect x="0" y="0" width="24" height="3" fill="#7179b2"/>
 <rect x="1.4" y="3.4" width="21.2" height="16.6" fill="none" stroke="#fff" stroke-width="1"/>
 <rect x="20.6" y=".4" width="2" height="1.8" fill="#c04fb0"/>
 <g fill="#6767dc"><rect x="4.2" y="6" width="3.6" height="3.4" rx=".8"/><rect x="10.2" y="6" width="3.6" height="3.4" rx=".8"/><rect x="16.2" y="6" width="3.6" height="3.4" rx=".8"/>
 <rect x="4.2" y="13.2" width="3.6" height="3.4" rx=".8"/><rect x="10.2" y="13.2" width="3.6" height="3.4" rx=".8"/><rect x="16.2" y="13.2" width="3.6" height="3.4" rx=".8"/></g>
 <g fill="#c9c9f1"><rect x="4.2" y="10.4" width="3.6" height=".8"/><rect x="10.2" y="10.4" width="3.6" height=".8"/><rect x="16.2" y="10.4" width="3.6" height=".8"/>
 <rect x="4.2" y="17.8" width="3.6" height=".8"/><rect x="10.2" y="17.8" width="3.6" height=".8"/><rect x="16.2" y="17.8" width="3.6" height=".8"/></g>
</g>
<g>
 <path d="M831.4 211.6 L841.2 220.4 L823 220.4 Z" fill="#9fdb0f"/>
 <rect x="823" y="219.6" width="18.4" height="1.2" fill="#6da008"/>
 <rect x="827.4" y="220.6" width="7" height="6.2" fill="#6aa007"/>
 <rect x="828.6" y="220.6" width="4.8" height="1.6" fill="#9fdb0f"/>
 <rect x="834.4" y="220.6" width="7" height="6.6" fill="#a2dc12"/>
 <path d="M830.8 227 L846 227 L838.2 234.6 Z" fill="#6aa007"/>
 <rect x="832.4" y="226.4" width="11.6" height="1" fill="#8cc80c"/>
</g>
<defs>
<linearGradient id="b0" x1="0" y1="0" x2="0" y2="1"><stop offset="0" stop-color="#f0a45c"/><stop offset=".24" stop-color="#f0a45c"/><stop offset=".24" stop-color="#c75b58"/><stop offset=".66" stop-color="#c75b58"/><stop offset=".66" stop-color="#a04a2e"/><stop offset="1" stop-color="#a04a2e"/></linearGradient>
<linearGradient id="b1" x1="0" y1="0" x2="0" y2="1"><stop offset="0" stop-color="#f8b462"/><stop offset=".24" stop-color="#f8b462"/><stop offset=".24" stop-color="#f2b70f"/><stop offset=".66" stop-color="#f2b70f"/><stop offset=".66" stop-color="#d8902e"/><stop offset="1" stop-color="#d8902e"/></linearGradient>
<linearGradient id="b2" x1="0" y1="0" x2="0" y2="1"><stop offset="0" stop-color="#a3de10"/><stop offset=".36" stop-color="#a3de10"/><stop offset=".36" stop-color="#6b9f08"/><stop offset="1" stop-color="#6b9f08"/></linearGradient>
<linearGradient id="b3" x1="0" y1="0" x2="0" y2="1"><stop offset="0" stop-color="#0d86e8"/><stop offset=".36" stop-color="#0d86e8"/><stop offset=".36" stop-color="#0764c6"/><stop offset="1" stop-color="#0764c6"/></linearGradient>
<linearGradient id="b4" x1="0" y1="0" x2="0" y2="1"><stop offset="0" stop-color="#9a62ee"/><stop offset=".36" stop-color="#9a62ee"/><stop offset=".36" stop-color="#7948d2"/><stop offset="1" stop-color="#7948d2"/></linearGradient>
<linearGradient id="b5" x1="0" y1="0" x2="0" y2="1"><stop offset="0" stop-color="#f29a2a"/><stop offset=".5" stop-color="#e8850b"/><stop offset="1" stop-color="#d27a1a"/></linearGradient>
<linearGradient id="b6" x1="0" y1="0" x2="0" y2="1"><stop offset="0" stop-color="#e6e6e6"/><stop offset=".5" stop-color="#bcbcbc"/><stop offset="1" stop-color="#9a9a9a"/></linearGradient>
<linearGradient id="b7" x1="0" y1="0" x2="0" y2="1"><stop offset="0" stop-color="#3e3e3e"/><stop offset=".5" stop-color="#3a3a3a"/><stop offset="1" stop-color="#383838"/></linearGradient>
<linearGradient id="b8" x1="0" y1="0" x2="0" y2="1"><stop offset="0" stop-color="#f4f4f4"/><stop offset=".5" stop-color="#ebebeb"/><stop offset="1" stop-color="#e2e2e2"/></linearGradient>
</defs>
<circle cx="1265" cy="454" r="9.5" fill="url(#b0)" stroke="#b24a3c" stroke-width="1"/>
<circle cx="1265" cy="487" r="9.5" fill="url(#b1)" stroke="#c9791e" stroke-width="1"/>
<circle cx="1265" cy="520.2" r="9.5" fill="url(#b2)" stroke="#5d8c0a" stroke-width="1"/>
<circle cx="1265" cy="553.3" r="9.5" fill="url(#b3)" stroke="#2a62b0" stroke-width="1"/>
<circle cx="1265" cy="586.4" r="9.5" fill="url(#b4)" stroke="#7a52c0" stroke-width="1"/>
<circle cx="1265" cy="619.3" r="9.5" fill="url(#b5)" stroke="#b8651a" stroke-width="1"/>
<circle cx="1265" cy="652.4" r="9.5" fill="url(#b6)" stroke="#8a8a8a" stroke-width="1"/>
<circle cx="1265" cy="685.2" r="9.5" fill="url(#b7)" stroke="#2e2e2e" stroke-width="1"/>
<circle cx="1265" cy="718" r="9.5" fill="url(#b8)" stroke="#dedede" stroke-width="1"/>
<g transform="translate(13 863)">
 <ellipse cx="12" cy="22.6" rx="11" ry="1.3" fill="#c9c9c9" opacity=".7"/>
 <path d="M0.5 11.5 C0.5 9.5 2 8.6 3 8.2 L1 5.2 C0.4 3.6 2.6 2.4 3.8 3.6 L6.6 6 L6.6 2 C6.6 -0.2 10.2 -0.2 10.4 2 L10.8 4.6 L13.2 4.6 L13.6 2 C13.8 -0.2 17.4 -0.2 17.4 2 L17.4 6 L20.2 3.6 C21.4 2.4 23.6 3.6 23 5.2 L21 8.2 C22.4 8.8 24 10 23.6 12.6 C22 17 17 21.8 12 22 C7 21.8 2 17 0.5 11.5 Z" fill="#e9870d"/>
 <circle cx="12" cy="12.6" r="6.4" fill="#fff"/>
 <circle cx="12" cy="12.6" r="7.3" fill="none" stroke="#c96d08" stroke-width=".8"/>
 <circle cx="12" cy="12.6" r="5" fill="#e9870d"/>
 <circle cx="12" cy="12.8" r="3.9" fill="#8d1804"/>
 <circle cx="13.4" cy="11.6" r="1.2" fill="#d2521a"/>
</g>
<path d="M1443 868.2 L1458 883 M1458 868.2 L1443 883" stroke="#8c8c8c" stroke-width="1.2" fill="none"/>
<path d="M1472 853 L1478 853 L1481 857 L1476 855.2 L1472 855.2 Z" fill="#3a48d0"/>
<path d="M-2 554.5 C 30 538 85 522.5 131 522.5 C 190 522.5 290 546 380 560 C 430 568 455 570 482 570.6 L482 603 L-2 603 Z" fill="#fff"/>
<path d="M812 391 C 840 376 868 365 897 365 C 945 365 1000 386 1055 399 C 1090 406.5 1110 408.3 1131 408.3 C 1160 408.3 1190 403 1215 398 L1215 443 L812 443 Z" fill="#fff"/>
<path d="M483 455 C 493 452 493.5 445 494.5 436 C 496 415 497.5 398 499.5 386 C 501 376 504 371 510.5 369" fill="none" stroke="#3f48cc" stroke-width="1"/>
<path d="M1218 254.8 C 1226 252 1227 238 1228 221 C 1229 200 1229.5 190 1230.5 180 C 1232 165 1235 150 1241 140" fill="none" stroke="#3f48cc" stroke-width="1"/>
<path d="M484 461 C 495 465 500 475 503.5 486 C 508 499 513 511 518.5 524 L 538 577 L 572.5 655" fill="none" stroke="#a349a4" stroke-width="1"/>
<path d="M571.8 800 C 563 820 556 838 549.6 855 C 542 876 536 895 530.4 913.5 C 526 928 521 942 514.3 954 C 508 966 500 980 489 991" fill="none" stroke="#a349a4" stroke-width="1"/>
<path d="M684.8 802 C 684 817 682.5 832 680.7 847 C 678 870 676 890 674.7 907.4 C 673.6 920 673 930 673 941.7 C 673 950 673.6 956 674.7 962 C 676 971 677.6 977 679.8 984" fill="none" stroke="#a349a4" stroke-width="1"/>
<rect x="5.6" y="435.6" width="472.8" height="35.8" fill="none" stroke="#a349a4" stroke-width="5.2"/>
<rect x="682.7" y="991.8" width="80.6" height="596" fill="none" stroke="#a349a4" stroke-width="5.2"/>
<ellipse cx="469.3" cy="1028.1" rx="44.4" ry="34.4" fill="none" stroke="#a349a4" stroke-width="5.2"/>
</svg>
<span class="t" style="left:557.88px;top:660.15px;font-size:25.5px;color:#b466b9;transform:scaleX(1.0347);">add</span>
<span class="t" style="left:526.09px;top:765.15px;font-size:25.5px;color:#b466b9;transform:scaleX(1.0127);">rename</span>
<span class="t" style="left:665.87px;top:765.15px;font-size:25.5px;color:#b466b9;transform:scaleX(1.0397);">add</span>
</body></html>
